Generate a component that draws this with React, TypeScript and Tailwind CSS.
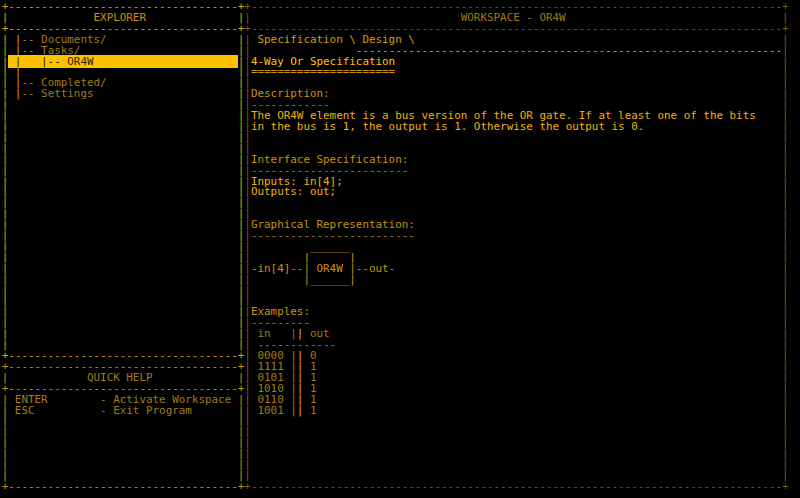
import React from 'react';

type Seg = [string, string];
type Row = Seg[];

const EX = 'text-[#dca200]';
const QH = 'text-[#c89300]';
const WS = 'text-[#7a5a0c]';
const DIM = 'text-[#a07c14]';
const MID = 'text-[#c89600]';
const BRIGHT = 'text-[#f0b400]';
const HI = 'text-[#ffc400]';

const rep = (c: string, n: number) => c.repeat(Math.max(0, n));
const pad = (s: string, n: number) => s + rep(' ', n - s.length);
const center = (s: string, n: number) => pad(rep(' ', Math.floor((n - s.length) / 2)) + s, n);

function Line({ segs }: { segs: Row }) {
  return (
    <div className="h-[10.92px] whitespace-pre">
      {segs.map(([t, c], i) => (
        <span key={i} className={c}>
          {t}
        </span>
      ))}
    </div>
  );
}

// a box drawn with +, - and | like the terminal does
function Box({
  inner,
  title,
  border,
  titleColor,
  rows,
  height,
}: {
  inner: number;
  title: string;
  border: string;
  titleColor: string;
  rows: Row[];
  height: number;
}) {
  const edge = '+' + rep('-', inner) + '+';
  const body: Row[] = [];
  for (let i = 0; i < height; i++) body.push(rows[i] ?? []);
  return (
    <div className="flex flex-col">
      <Line segs={[[edge, border]]} />
      <Line segs={[['|', border], [center(title, inner), titleColor], ['|', border]]} />
      <Line segs={[[edge, border]]} />
      {body.map((r, i) => {
        const len = r.reduce((a, [t]) => a + t.length, 0);
        return <Line key={i} segs={[['|', border], ...r, [rep(' ', inner - len), ''], ['|', border]]} />;
      })}
      <Line segs={[[edge, border]]} />
    </div>
  );
}

const explorerRows: Row[] = [
  [[' ', ''], ['|', EX], ['-- Documents/', DIM]],
  [[' ', ''], ['|', EX], ['-- Tasks/', DIM]],
  [[pad(' |   |-- OR4W', 35), 'bg-[#ffc000] text-[#2a1e00]']],
  [[' ', ''], ['|', EX]],
  [[' ', ''], ['|', EX], ['-- Completed/', DIM]],
  [[' ', ''], ['|', EX], ['-- Settings', DIM]],
];

const helpRows: Row[] = [
  [[' ENTER        - Activate Workspace', DIM]],
  [[' ESC          - Exit Program', DIM]],
];

const table = [
  ['0000', '0'],
  ['1111', '1'],
  ['0101', '1'],
  ['1010', '1'],
  ['0110', '1'],
  ['1001', '1'],
];

const workspaceRows: Row[] = [
  [[' Specification \\ Design \\', 'text-[#d49e00]']],
  [[rep(' ', 16), ''], [rep('-', 65), 'text-[#e0a800]']],
  [['4-Way Or Specification', HI]],
  [[rep('=', 22), MID]],
  [],
  [['Description:', MID]],
  [[rep('-', 12), DIM]],
  [['The OR4W element is a bus version of the OR gate. If at least one of the bits', BRIGHT]],
  [['in the bus is 1, the output is 1. Otherwise the output is 0.', BRIGHT]],
  [],
  [],
  [['Interface Specification:', MID]],
  [[rep('-', 24), DIM]],
  [['Inputs: in[4];', BRIGHT]],
  [['Outputs: out;', BRIGHT]],
  [],
  [],
  [['Graphical Representation:', MID]],
  [[rep('-', 25), DIM]],
  [['         ______', MID]],
  [['        |      |', MID]],
  [['-in[4]--| OR4W |--out-', MID]],
  [['        |______|', MID]],
  [],
  [],
  [['Examples:', MID]],
  [[rep('-', 9), DIM]],
  [[' in   ', DIM], ['|', DIM], ['|', BRIGHT], [' out', DIM]],
  [[' ' + rep('-', 12), DIM]],
  ...table.map(([a, b]): Row => [[' ' + a + ' ', DIM], ['|', DIM], ['|', BRIGHT], [' ' + b, DIM]]),
];

export default function App() {
  return (
    <div className="w-[800px] h-[498px] overflow-hidden bg-black pl-[1.72px] pt-[2px] font-['DejaVu_Sans_Mono',monospace] text-[10.9px] leading-[10.92px]">
      <div className="flex">
        {/* left column */}
        <div className="flex flex-col">
          <Box inner={35} title="EXPLORER" border={EX} titleColor={MID} rows={explorerRows} height={29} />
          <Box inner={35} title="QUICK HELP" border={QH} titleColor={DIM} rows={helpRows} height={8} />
        </div>
        {/* workspace */}
        <Box inner={81} title="WORKSPACE - OR4W" border={WS} titleColor="text-[#a07a10]" rows={workspaceRows} height={41} />
      </div>
    </div>
  );
}
